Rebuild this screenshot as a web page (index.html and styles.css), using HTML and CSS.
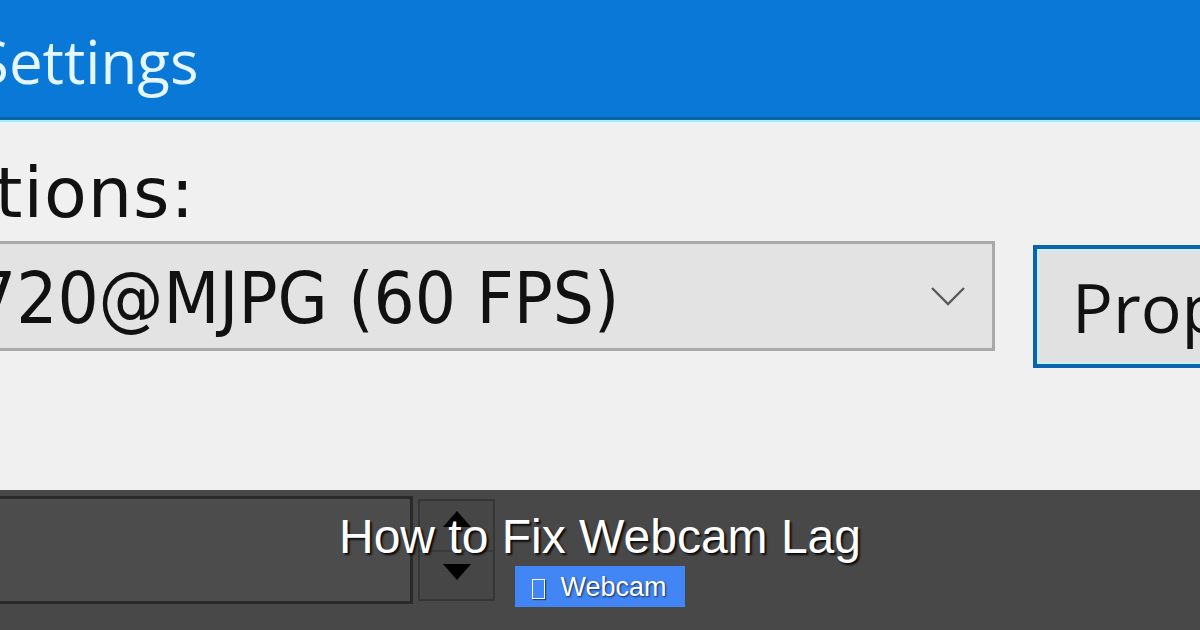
FILE: index.html
```html
<!DOCTYPE html>
<html>

<head>
    <meta charset="UTF-8">
    <title>How to Fix Webcam Lag</title>
    <link rel="stylesheet" href="styles.css">
</head>

<body>

<div class="dialog">
    <div class="titlebar">
        <span class="title">Settings</span>
    </div>
    <div class="content">
        <div class="label">tions:</div>
        <div class="row">
            <div class="combo">
                <span class="combo-text">720@MJPG (60 FPS)</span>
                <svg class="chevron" width="34" height="19" viewBox="0 0 34 19">
                    <polyline points="1,1 17,17 33,1" fill="none" stroke="#5a5a5a" stroke-width="2.4"/>
                </svg>
            </div>
            <div class="btn">Prop</div>
        </div>
        <div class="spin">
            <div class="spin-field"></div>
            <div class="spin-buttons">
                <div class="spin-half spin-up">
                    <svg width="28" height="16" viewBox="0 0 28 16"><polygon points="14,0 28,16 0,16" fill="#000"/></svg>
                </div>
                <div class="spin-half spin-down">
                    <svg width="28" height="16" viewBox="0 0 28 16"><polygon points="0,0 28,0 14,16" fill="#000"/></svg>
                </div>
            </div>
        </div>
    </div>
</div>

<div class="overlay">
    <h1 class="post-title">How to Fix Webcam Lag</h1>
    <span class="tag"><span class="tag-icon"></span>Webcam</span>
</div>

</body>

</html>
```

FILE: styles.css
```css
* {
    margin: 0;
    padding: 0;
    box-sizing: border-box;
}
body {
    position: relative;
    width: 1200px;
    height: 630px;
    overflow: hidden;
    background: #f0f0f0;
}
/* window title bar */
.titlebar {
    height: 120px;
    padding-top: 20px;
    background: #0a78d6;
    border-bottom: 3px solid #0b64aa;
    box-shadow: 0 2px 0 #a6eef6, 0 5px 0 #e8f5f8;
}
.title {
    display: block;
    margin-left: -24px;
    font-family: "Open Sans", "Noto Sans", sans-serif;
    font-size: 60px;
    line-height: 82px;
    color: #e4f6ff;
    white-space: nowrap;
}
.content {
    padding-top: 35px;
}
.label {
    margin-left: -5px;
    font-family: "DejaVu Sans", sans-serif;
    font-size: 70px;
    line-height: 77px;
    letter-spacing: 1px;
    color: #111;
    white-space: nowrap;
}
.row {
    display: flex;
    align-items: flex-start;
    margin-top: 9px;
}
/* drop-down list */
.combo {
    display: flex;
    width: 1025px;
    flex-shrink: 0;
    height: 110px;
    margin-left: -30px;
    padding: 4px 27px 0 2px;
    border: 3px solid #a9a9a9;
    background: #e3e3e3;
}
.combo-text {
    font-family: "DejaVu Sans Condensed", "DejaVu Sans", sans-serif;
    font-stretch: condensed;
    font-size: 72px;
    line-height: 100px;
    color: #111;
    white-space: nowrap;
}
.chevron {
    margin-left: auto;
    align-self: center;
    margin-top: -4px;
}
.btn {
    flex-shrink: 0;
    width: 260px;
    height: 123px;
    margin: 4px 0 0 38px;
    padding: 18px 0 0 35px;
    border: 4px solid #0b63b0;
    box-shadow: inset 0 0 0 2px #c5f1fb;
    background: #e1e1e1;
    font-family: "Open Sans", "Noto Sans", sans-serif;
    font-size: 68px;
    line-height: 80px;
    color: #111;
}
/* number box with arrows */
.spin {
    display: flex;
    align-items: flex-start;
    margin-top: 128px;
}
.spin-field {
    width: 433px;
    height: 108px;
    margin-left: -20px;
    border: 3px solid #8c8c8c;
    background: #fff;
}
.spin-buttons {
    width: 77px;
    height: 102px;
    margin: 3px 0 0 5px;
    border: 2px solid #b4b4b4;
    background: #ececec;
}
.spin-half {
    display: flex;
    justify-content: center;
    height: 49px;
}
.spin-up {
    padding-top: 10px;
}
.spin-down {
    padding-top: 12px;
    border-top: 2px solid #c4c4c4;
}
/* caption strip */
.overlay {
    position: absolute;
    left: 0;
    right: 0;
    bottom: 0;
    height: 140px;
    padding-top: 18px;
    display: flex;
    flex-direction: column;
    align-items: center;
    background: rgba(0, 0, 0, .7);
}
.post-title {
    font-family: "Liberation Sans", Arial, sans-serif;
    font-size: 48px;
    font-weight: normal;
    line-height: 57.6px;
    color: #fff;
    text-shadow: 2px 2px 2px rgba(0, 0, 0, .85);
    white-space: nowrap;
}
.tag {
    display: inline-flex;
    align-items: center;
    padding: 5px 18px 4px 17px;
    background: #4285f4;
    font-family: "Liberation Sans", Arial, sans-serif;
    font-size: 27px;
    line-height: 32px;
    color: #fff;
    text-shadow: 1px 1px 2px rgba(0, 0, 0, .7);
}
.tag-icon {
    width: 13px;
    height: 20px;
    margin: 4px 15px 0 0;
    border: 1.5px solid #fff;
    box-shadow: 1px 1px 1px rgba(0, 0, 0, .5);
}
```
